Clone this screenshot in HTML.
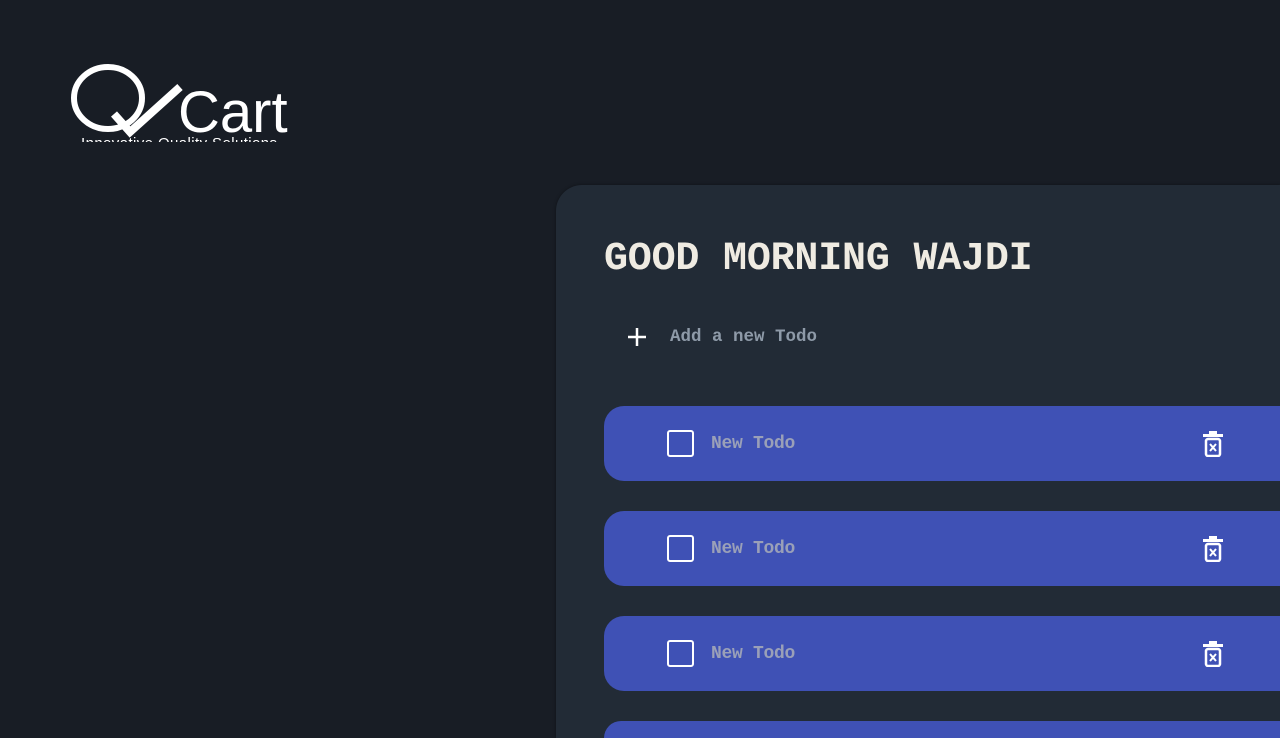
<!DOCTYPE html>
<html style="margin:0;width:1280px;height:738px;overflow:hidden"><head><style>
body{margin:0;width:1280px;height:738px;background:#181d25;overflow:hidden;position:relative;font-family:"Liberation Mono",monospace}
.wrap{position:absolute;left:0;top:0;width:1280px;height:738px;overflow:hidden}
.logo{position:absolute;left:70px;top:62px;width:225px;height:80px;overflow:hidden;color:#fff}
.card{position:absolute;left:556px;top:185px;width:724px;height:553px;background:#222b36;border-radius:26px 0 0 0;box-shadow:0 0 3px rgba(0,0,0,.4)}
h1{position:absolute;left:604px;top:237px;margin:0;font-size:40px;font-weight:bold;color:#efebe2;letter-spacing:-0.2px}
.add{position:absolute;left:670px;top:327px;font-size:17.5px;font-weight:bold;color:#8e9aa8}
.item{position:absolute;left:604px;width:676px;height:75px;background:#3f51b5;border-radius:20px 0 0 20px}
.cb{position:absolute;left:63px;top:24px;border:2.5px solid #fff;border-radius:3px;box-sizing:border-box;width:27px;height:27px}
.t{position:absolute;left:107px;top:28px;font-size:18px;font-weight:bold;color:#9aa0b8;letter-spacing:-0.3px}
.del{position:absolute;left:598px;top:25px}
</style></head><body><div class="wrap">
<div class="logo">
<svg width="225" height="80" viewBox="0 0 225 80">
<ellipse cx="38" cy="36" rx="34" ry="31" fill="none" stroke="#fff" stroke-width="6"/>
<path d="M44 52 L60 70 L110 25" fill="none" stroke="#fff" stroke-width="8"/>
<text x="108" y="70" font-family="Liberation Sans,sans-serif" font-size="58" fill="#fff">Cart</text>
<text x="11" y="86" font-family="Liberation Sans,sans-serif" font-size="15" fill="#fff" textLength="196">Innovative Quality Solutions</text>
</svg></div>
<div class="card"></div>
<h1>GOOD MORNING WAJDI</h1>
<svg style="position:absolute;left:627px;top:327px" width="20" height="20"><path d="M10 1V19M1 10H19" stroke="#fff" stroke-width="2.5"/></svg>
<div class="add">Add a new Todo</div>
<div class="item" style="top:406px"><div class="cb"></div><div class="t">New Todo</div><svg class="del" width="22" height="26" viewBox="0 0 22 26"><rect x="1" y="3" width="20" height="3" fill="#fff"/><rect x="7" y="0" width="8" height="3" fill="#fff"/><rect x="4" y="8" width="14" height="17" rx="2" fill="none" stroke="#fff" stroke-width="2.5"/><path d="M8 13L14 20M14 13L8 20" stroke="#fff" stroke-width="2"/></svg></div>
<div class="item" style="top:511px"><div class="cb"></div><div class="t">New Todo</div><svg class="del" width="22" height="26" viewBox="0 0 22 26"><rect x="1" y="3" width="20" height="3" fill="#fff"/><rect x="7" y="0" width="8" height="3" fill="#fff"/><rect x="4" y="8" width="14" height="17" rx="2" fill="none" stroke="#fff" stroke-width="2.5"/><path d="M8 13L14 20M14 13L8 20" stroke="#fff" stroke-width="2"/></svg></div>
<div class="item" style="top:616px"><div class="cb"></div><div class="t">New Todo</div><svg class="del" width="22" height="26" viewBox="0 0 22 26"><rect x="1" y="3" width="20" height="3" fill="#fff"/><rect x="7" y="0" width="8" height="3" fill="#fff"/><rect x="4" y="8" width="14" height="17" rx="2" fill="none" stroke="#fff" stroke-width="2.5"/><path d="M8 13L14 20M14 13L8 20" stroke="#fff" stroke-width="2"/></svg></div>
<div class="item" style="top:721px;height:17px;border-radius:20px 0 0 0"></div>
</div></body></html>
